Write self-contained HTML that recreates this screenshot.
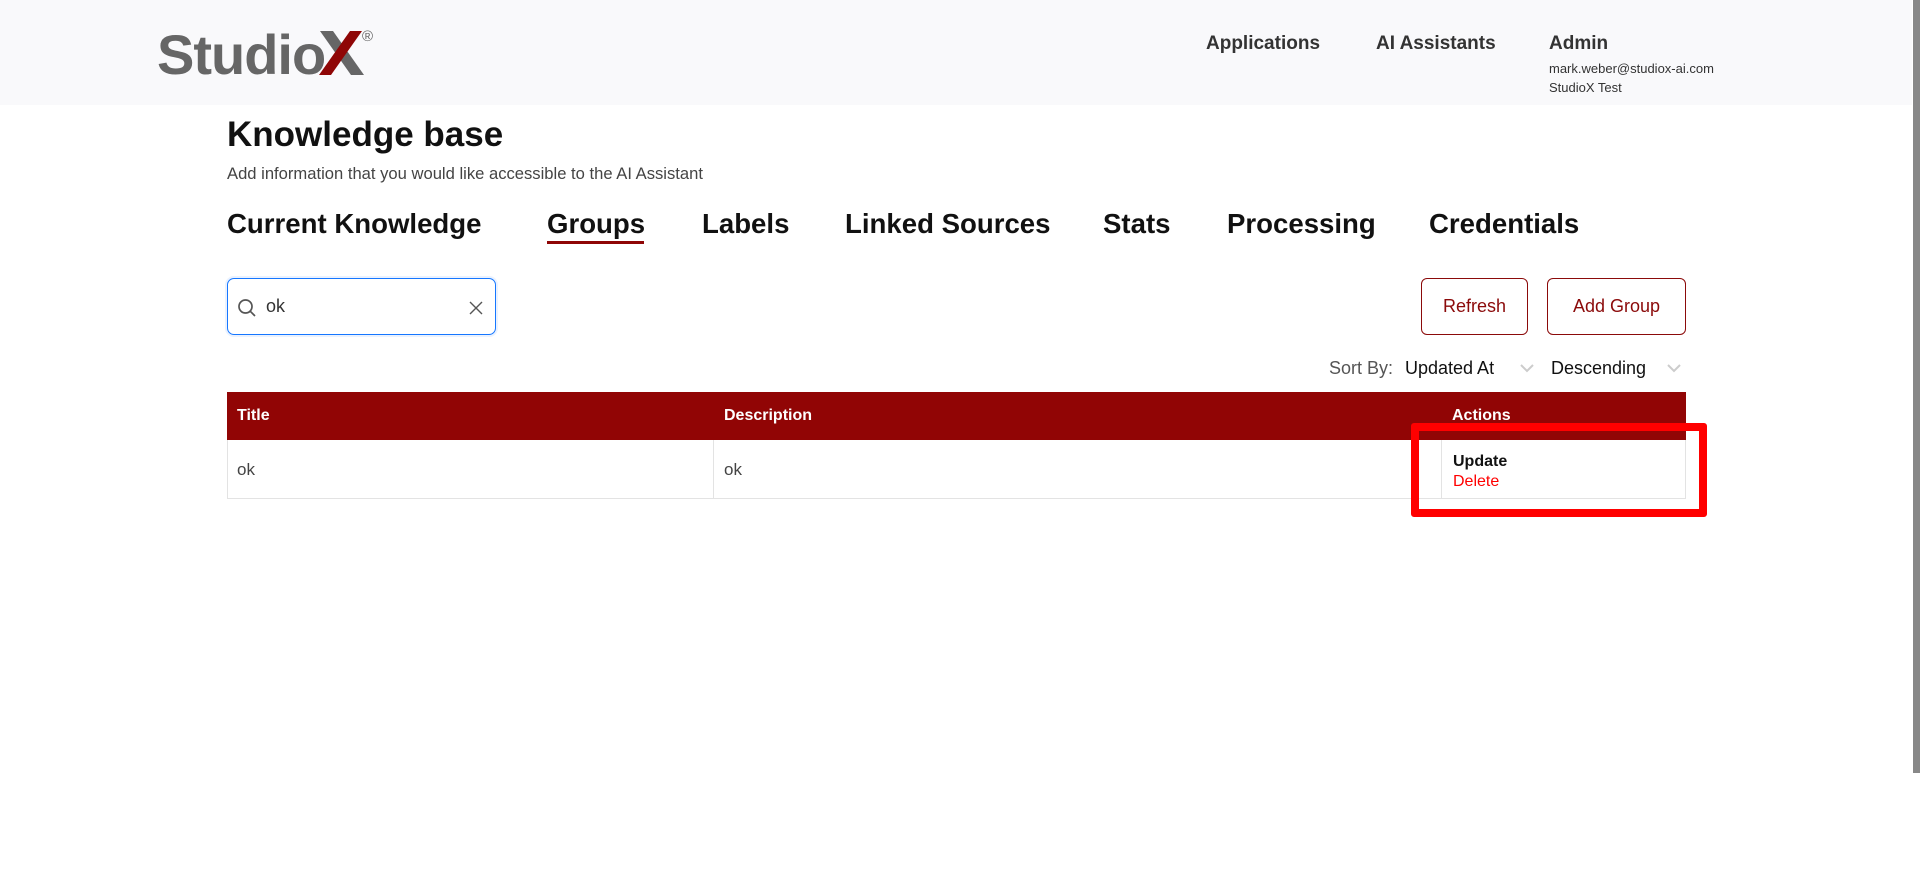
<!DOCTYPE html>
<html><head><meta charset="utf-8"><style>
*{box-sizing:border-box;margin:0;padding:0}
body{width:1920px;height:878px;position:relative;background:#fff;font-family:"Liberation Sans",sans-serif;overflow:hidden;color:#111}
.a{position:absolute;white-space:nowrap}
.hdr{position:absolute;left:0;top:0;width:1912px;height:105px;background:#f9f9fb}
.nav{font-weight:bold;font-size:19px;color:#333}
.tab{font-weight:bold;font-size:27.6px;color:#111;top:208px}
.btn{position:absolute;top:278px;height:57px;border:1px solid #8b0a0a;border-radius:6px;color:#8b0a0a;font-size:18px;display:flex;align-items:center;justify-content:center}
</style></head><body>
<div class="hdr"></div>
<div class="a" style="left:157px;top:22px;font-size:56px;font-weight:bold;color:#666;letter-spacing:-1px">Studio</div>
<svg class="a" style="left:318px;top:31px" width="48" height="44" viewBox="0 0 48 44"><path d="M2 0H15L46 44H33Z" fill="#666"/><path d="M32 0H44L13 44H1Z" fill="#8f0606"/></svg>
<div class="a" style="left:362px;top:28px;font-size:15px;color:#666">®</div>
<div class="a nav" style="left:1206px;top:33px">Applications</div>
<div class="a nav" style="left:1376px;top:33px">AI Assistants</div>
<div class="a nav" style="left:1549px;top:33px">Admin</div>
<div class="a" style="left:1549px;top:61px;font-size:13px;color:#333">mark.weber@studiox-ai.com</div>
<div class="a" style="left:1549px;top:80px;font-size:13px;color:#333">StudioX Test</div>
<div class="a" style="left:1913px;top:0;width:7px;height:773px;background:#888"></div>
<div class="a" style="left:227px;top:115px;font-size:35px;font-weight:bold">Knowledge base</div>
<div class="a" style="left:227px;top:164px;font-size:16.6px;color:#444">Add information that you would like accessible to the AI Assistant</div>
<div class="a tab" style="left:227px">Current Knowledge</div>
<div class="a tab" style="left:547px">Groups</div>
<div class="a" style="left:547px;top:241px;width:97px;height:3px;background:#8f0606"></div>
<div class="a tab" style="left:702px">Labels</div>
<div class="a tab" style="left:845px">Linked Sources</div>
<div class="a tab" style="left:1103px">Stats</div>
<div class="a tab" style="left:1227px">Processing</div>
<div class="a tab" style="left:1429px">Credentials</div>
<div class="a" style="left:227px;top:278px;width:269px;height:57px;border:1px solid #1677ff;border-radius:7px;box-shadow:0 0 0 2px #eaf2ff"></div>
<svg class="a" style="left:237px;top:298px" width="20" height="20" viewBox="0 0 20 20"><circle cx="8.5" cy="8.5" r="6.5" fill="none" stroke="#555" stroke-width="1.7"/><path d="M13.3 13.3L18 18" stroke="#555" stroke-width="1.7"/></svg>
<div class="a" style="left:266px;top:296px;font-size:18px;color:#333">ok</div>
<svg class="a" style="left:469px;top:301px" width="14" height="14" viewBox="0 0 14 14"><path d="M1 1L13 13M13 1L1 13" stroke="#555" stroke-width="1.4"/></svg>
<div class="btn" style="left:1421px;width:107px">Refresh</div>
<div class="btn" style="left:1547px;width:139px">Add Group</div>
<div class="a" style="left:1329px;top:358px;font-size:18px;color:#555">Sort By:</div>
<div class="a" style="left:1405px;top:358px;font-size:18px;color:#111">Updated At</div>
<svg class="a" style="left:1520px;top:364px" width="14" height="9" viewBox="0 0 14 9"><path d="M1 1L7 7L13 1" fill="none" stroke="#ccc" stroke-width="2"/></svg>
<div class="a" style="left:1551px;top:358px;font-size:18px;color:#111">Descending</div>
<svg class="a" style="left:1667px;top:364px" width="14" height="9" viewBox="0 0 14 9"><path d="M1 1L7 7L13 1" fill="none" stroke="#ccc" stroke-width="2"/></svg>
<div class="a" style="left:227px;top:392px;width:1459px;height:48px;background:#910505"></div>
<div class="a" style="left:237px;top:407px;font-size:16px;font-weight:bold;color:#fff">Title</div>
<div class="a" style="left:724px;top:407px;font-size:16px;font-weight:bold;color:#fff">Description</div>
<div class="a" style="left:1452px;top:407px;font-size:16px;font-weight:bold;color:#fff">Actions</div>
<div class="a" style="left:227px;top:440px;width:1459px;height:59px;border:1px solid #e3e3e3;border-top:none"></div>
<div class="a" style="left:713px;top:440px;width:1px;height:59px;background:#e3e3e3"></div>
<div class="a" style="left:1441px;top:440px;width:1px;height:59px;background:#e3e3e3"></div>
<div class="a" style="left:237px;top:460px;font-size:17px;color:#444">ok</div>
<div class="a" style="left:724px;top:460px;font-size:17px;color:#444">ok</div>
<div class="a" style="left:1453px;top:453px;font-size:16px;font-weight:bold;color:#111">Update</div>
<div class="a" style="left:1453px;top:473px;font-size:16px;color:#f00">Delete</div>
<div class="a" style="left:1411px;top:423px;width:296px;height:94px;border:8px solid #f00;border-radius:3px"></div>
</body></html>
